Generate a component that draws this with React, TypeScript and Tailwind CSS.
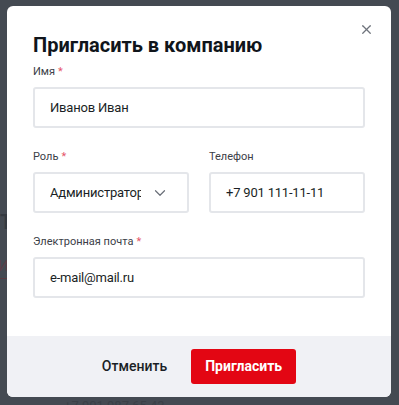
import { X, ChevronDown } from "lucide-react";

const font = { fontFamily: "Roboto, 'Noto Sans', Arial, sans-serif" };

export default function App() {
  return (
    <div className="relative h-[405px] w-[399px] overflow-hidden bg-[#444a52]" style={font}>
      {/* page behind the overlay */}
      <div className="absolute left-0 top-[207px] text-[20px] font-bold text-[#353a41]">Т</div>
      <div className="absolute left-[-2px] top-[255px] border-b border-[#5a3b42] text-[15px] text-[#5b3f47]">И</div>
      <div className="absolute left-[64px] top-[396px] text-[13px] text-[#3a4047]">+7 901 987 65 43</div>

      <div className="relative ml-[7px] mt-[6px] flex h-[391px] w-[384px] flex-col overflow-hidden rounded-[6px] bg-white">
        <button className="absolute right-[17px] top-[16px] text-[#6e737b]">
          <X size={15} strokeWidth={2} />
        </button>

        <div className="flex-1 px-[26px] pt-[25px]">
          <h2 className="text-[20px] font-bold leading-[28px] text-[#10151b]">Пригласить в компанию</h2>

          <Field label="Имя" required className="mt-[5px]">
            <Input value="Иванов Иван" />
          </Field>

          <div className="mt-[21px] grid grid-cols-2 gap-[20px]">
            <Field label="Роль" required>
              <div className="flex h-[41px] items-center rounded-[3px] border-2 border-[#e4e6ea] pl-[15px] pr-[18px]">
                <span className="flex-1 overflow-hidden whitespace-nowrap text-[13px] tracking-[-0.2px] text-[#1a1f25]">Администратор</span>
                <ChevronDown size={18} strokeWidth={1.6} className="ml-[10px] shrink-0 text-[#6b7079]" />
              </div>
            </Field>
            <Field label="Телефон">
              <Input value="+7 901 111-11-11" />
            </Field>
          </div>

          <Field label="Электронная почта" required className="mt-[21px]">
            <Input value="e-mail@mail.ru" />
          </Field>
        </div>

        <div className="flex h-[61px] items-center justify-center gap-[24px] bg-[#f0f1f5]">
          <button className="text-[14px] font-medium text-[#1a1f25]">Отменить</button>
          <button className="h-[35px] w-[105px] rounded-[3px] bg-[#e30613] text-[14px] font-bold text-white">Пригласить</button>
        </div>
      </div>
    </div>
  );
}

function Field({ label, required = false, className = "", children }: { label: string; required?: boolean; className?: string; children: React.ReactNode }) {
  return (
    <div className={className}>
      <div className="mb-[7px] text-[11px] leading-[16px] text-[#3b4047]">
        {label}
        {required ? <span className="ml-[3px] text-[#e5566a]">*</span> : null}
      </div>
      {children}
    </div>
  );
}

function Input({ value }: { value: string }) {
  return (
    <div className="flex h-[41px] items-center rounded-[3px] border-2 border-[#e4e6ea] px-[15px] text-[13px] tracking-[-0.2px] text-[#1a1f25]">
      {value}
    </div>
  );
}
